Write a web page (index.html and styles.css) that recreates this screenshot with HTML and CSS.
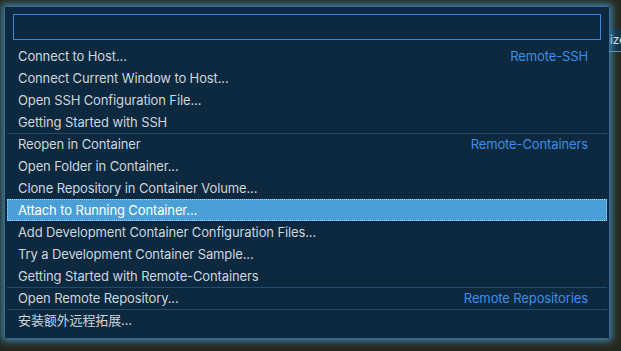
FILE: index.html
```html
<!DOCTYPE html>
<html lang="en">
<head>
    <meta charset="UTF-8">
    <title>Remote Commands</title>
    <link rel="stylesheet" href="styles.css">
</head>
<body>

    <div class="workbench">
        <div class="peek">ize</div>

        <div class="quick-pick">
            <input type="text" class="quick-input">

            <div class="list">
                <div class="row"><span>Connect to Host...</span><span class="group">Remote-SSH</span></div>
                <div class="row"><span>Connect Current Window to Host...</span></div>
                <div class="row"><span>Open SSH Configuration File...</span></div>
                <div class="row"><span>Getting Started with SSH</span></div>
                <div class="row sep"><span>Reopen in Container</span><span class="group">Remote-Containers</span></div>
                <div class="row"><span>Open Folder in Container...</span></div>
                <div class="row"><span>Clone Repository in Container Volume...</span></div>
                <div class="row active"><span>Attach to Running Container...</span></div>
                <div class="row"><span>Add Development Container Configuration Files...</span></div>
                <div class="row"><span>Try a Development Container Sample...</span></div>
                <div class="row"><span>Getting Started with Remote-Containers</span></div>
                <div class="row sep"><span>Open Remote Repository...</span><span class="group">Remote Repositories</span></div>
                <div class="row sep"><span>安装额外远程拓展...</span></div>
            </div>
        </div>
    </div>

</body>
</html>
```

FILE: styles.css
```css
body {
    margin: 0;
    background-color: #25291f;
    font-family: Inter, "Noto Sans CJK SC", sans-serif;
    font-size: 13px;
    letter-spacing: -0.12px;
    color: #cfd6dc;
}

.workbench {
    position: relative;
    width: 621px;
    height: 351px;
    overflow: hidden;
}

/* bit of the editor peeking out on the right */
.peek {
    margin: 29px 0 0 607px;
    height: 22px;
    line-height: 22px;
    padding-left: 3px;
    background-color: #143249;
    border-bottom: 1px solid #6d8799;
    color: #e2e6e8;
    font-size: 12px;
}

.quick-pick {
    position: absolute;
    left: 5px;
    top: 7px;
    width: 604px;
    height: 331px;
    box-sizing: border-box;
    padding-top: 7px;
    background-color: #0c2940;
    box-shadow: 0 0 7px 3px rgba(72, 160, 215, 0.75);
}

.quick-input {
    display: block;
    box-sizing: border-box;
    width: 588px;
    height: 26px;
    margin: 0 8px;
    padding: 0 6px;
    border: 1px solid #3a87d8;
    background-color: #0c2940;
    color: #cfd6dc;
    outline: none;
}

.list {
    margin: 5px 2px 0;
}

.row {
    display: flex;
    justify-content: space-between;
    box-sizing: border-box;
    height: 22px;
    line-height: 22px;
    padding: 0 19px 0 11px;
    white-space: nowrap;
}

.row.sep {
    border-top: 1px solid #1d4c6e;
    line-height: 21px;
}

.row.active {
    background-color: #4a9fd7;
    color: #ffffff;
    outline: 1px dotted #a8d3f0;
    outline-offset: -1px;
}

.group {
    color: #3b90e6;
}
```
